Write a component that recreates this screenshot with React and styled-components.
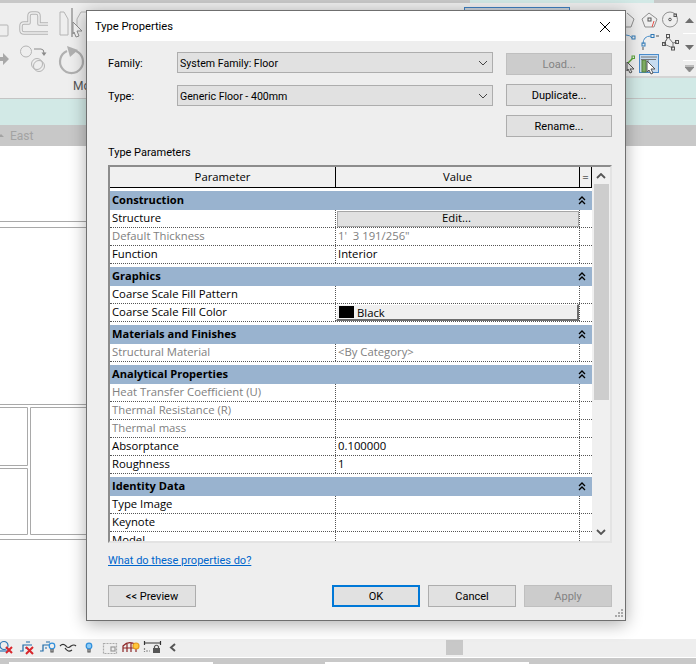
import React from 'react';
import styled, { createGlobalStyle } from 'styled-components';

const TOP_BUTTONS = [
    { label: 'Load...', disabled: true },
    { label: 'Duplicate...' },
    { label: 'Rename...' }
];

const GROUPS = [
    {
        title: 'Construction',
        rows: [
            { name: 'Structure', edit: 'Edit...' },
            { name: 'Default Thickness', value: '1\'  3 191/256"', dim: true },
            { name: 'Function', value: 'Interior' }
        ]
    },
    {
        title: 'Graphics',
        rows: [
            { name: 'Coarse Scale Fill Pattern' },
            { name: 'Coarse Scale Fill Color', color: 'Black' }
        ]
    },
    {
        title: 'Materials and Finishes',
        rows: [
            { name: 'Structural Material', value: '<By Category>', dim: true }
        ]
    },
    {
        title: 'Analytical Properties',
        rows: [
            { name: 'Heat Transfer Coefficient (U)', dim: true },
            { name: 'Thermal Resistance (R)', dim: true },
            { name: 'Thermal mass', dim: true },
            { name: 'Absorptance', value: '0.100000' },
            { name: 'Roughness', value: '1' }
        ]
    },
    {
        title: 'Identity Data',
        rows: [{ name: 'Type Image' }, { name: 'Keynote' }, { name: 'Model' }]
    }
];

const DoubleChevron = () => (
    <svg width="8" height="9" viewBox="0 0 8 9" fill="none" stroke="#000" strokeWidth="1.3">
        <path d="M1 4 L4 1 L7 4" />
        <path d="M1 8 L4 5 L7 8" />
    </svg>
);

const SelectArrow = () => (
    <svg width="10" height="6" viewBox="0 0 10 6" fill="none" stroke="#444" strokeWidth="1">
        <path d="M1 1 L5 5 L9 1" />
    </svg>
);

const LeftRibbonIcons = () => (
    <svg width="86" height="76" viewBox="0 3 86 76" fill="none" stroke="#b4b4b4">
        <rect x="-2" y="25" width="10" height="11" rx="1" strokeWidth="1" />
        <g strokeLinejoin="round">
            <path d="M48 24 H39 V16 Q39 13 36 13 H32 Q29 13 29 16 V23 H24 Q21 23 21 26 V30 Q21 33 24 33 H48" strokeWidth="3.5" />
            <path d="M48 24 H39 V16 Q39 13 36 13 H32 Q29 13 29 16 V23 H24 Q21 23 21 26 V30 Q21 33 24 33 H48" stroke="#eee" strokeWidth="1.5" />
        </g>
        <path d="M60 12 H64 L68 19 V35 H60 Z" strokeWidth="1" />
        <path d="M77 35 V19 L81 12 H86" strokeWidth="1" />
        <path d="M72 8 V37" stroke="#9a9a9a" strokeWidth="1.5" />
        <path d="M73 22 L82 31 H77 L79 36 L76 37 L74 32 L73 34 Z" fill="#f4f4f4" stroke="#8d8d8d" strokeWidth="1" />
        <path d="M-2 57 H3 V53 L9 59 L3 65 V61 H-2 Z" fill="#a8a8a8" stroke="none" />
        <circle cx="26" cy="51.500" r="5.500" strokeWidth="1" />
        <circle cx="37" cy="64" r="5.500" strokeWidth="1" />
        <circle cx="39" cy="66" r="5.500" strokeWidth="1" />
        <path d="M34 49 H41 Q44 49 44 53" stroke="#8a8a8a" strokeWidth="1" />
        <path d="M41.500 52.500 H46.500 L44 56 Z" fill="#8a8a8a" stroke="none" />
        <path d="M67 51 A11.500 11.500 0 1 0 76 51" stroke="#b0b0b0" strokeWidth="2.2" />
        <path d="M67 46 L78 50 L70 57 Z" fill="#b0b0b0" stroke="none" />
    </svg>
);

const RightRibbonIcons = () => (
    <svg width="57" height="70" viewBox="626 8 57 70" fill="none" stroke="#8f8f8f" strokeWidth="1">
        <path d="M627 13 L634 19 L631 27 H626" />
        <path d="M649 13 L657 19 L654 27 H645 L642 19 Z" />
        <rect x="648" y="18" width="3" height="3" stroke="#555" />
        <path d="M654 21 L652 27" stroke="#e5524c" />
        <circle cx="670" cy="19.500" r="7.500" />
        <circle cx="670" cy="19.500" r="1.300" stroke="#555" />
        <rect x="674" y="14" width="2.500" height="2.500" stroke="#555" />
        <path d="M626 35 Q630 35 632 38" stroke="#4d90c9" />
        <rect x="632" y="36" width="3" height="3" stroke="#2f78b5" />
        <path d="M643 44 Q643 36 651 36" stroke="#4d90c9" />
        <rect x="651" y="34.500" width="3" height="3" stroke="#2f78b5" />
        <rect x="642" y="43" width="3" height="3" stroke="#2f78b5" />
        <path d="M656 36 H659 M643 47 V50" stroke="#555" />
        <path d="M664 44 L668 37 L673 43 L677 42 M673 43 L673 48 M668 37 L664 44 L673 48" stroke="#777" />
        <rect x="666.500" y="34.500" width="3" height="3" stroke="#555" />
        <rect x="662.500" y="42.500" width="3" height="3" stroke="#555" />
        <rect x="675.500" y="40.500" width="3" height="3" stroke="#555" />
        <rect x="671.500" y="47" width="3" height="3" stroke="#555" />
        <path d="M628 63 L633 58" stroke="#5aa637" strokeWidth="1.500" />
        <rect x="632" y="56" width="2.500" height="2.500" stroke="#5aa637" />
        <path d="M627 62 L634 69 H630 L632 72 L630 73 L628 69 L627 71 Z" fill="#eee" stroke="#555" />
        <rect x="639.500" y="54.500" width="19" height="18" fill="#c6dcf1" stroke="#4a8ccb" />
        <rect x="642" y="60" width="4" height="12" fill="#7eab63" stroke="#54803c" />
        <path d="M641 57 H657 M641 59.500 H656 M648 60 V72" stroke="#777" />
        <path d="M647 61 L655 69 H651 L653 73 L651 74 L649 70 L647 72 Z" fill="#fff" stroke="#555" />
    </svg>
);

const CanvasDrawing = () => (
    <svg width="696" height="493" viewBox="0 146 696 493" fill="none" stroke="#a9a9a9" strokeWidth="1">
        <path d="M0 221.500 H90 M0 227.500 H90 M0 404.500 H90 M0 539.500 H90" />
        <path d="M0 407.500 H27.500 V465.500 H0 M0 468.500 H27.500 V534.500 H0" />
        <path d="M90 407.500 H30.500 V534.500 H90" />
    </svg>
);

const StatusIcons = () => (
    <svg width="178" height="18" viewBox="0 639 178 18" fill="none" strokeWidth="1.200">
        <circle cx="4" cy="645.500" r="4" stroke="#2f78b5" />
        <path d="M0 651 H9" stroke="#2f78b5" />
        <path d="M6 647 L12 653 M12 647 L6 653" stroke="#d8262c" strokeWidth="2" />
        <path d="M20 651 H23 V645 H32 M26 642 H30 M25 648 H27" stroke="#1f6aa8" />
        <path d="M26 647 L33 654 M33 647 L26 654" stroke="#d8262c" strokeWidth="2" />
        <path d="M40 651 H43 V645 H49 M46 642 H50 M45 648 H47" stroke="#1f6aa8" />
        <circle cx="52" cy="646" r="2.800" stroke="#2f8fdc" />
        <path d="M51 649 V652 H53 V649" stroke="#555" />
        <path d="M60 646 Q63 643 66 646 Q68 649 71 646 Q74 644 76 646 M65 648 Q68 653 72 650" stroke="#333" />
        <circle cx="89" cy="646" r="2.800" fill="#8ccaf5" stroke="#2f8fdc" />
        <path d="M88 649 V652 H90 V649" stroke="#555" />
        <rect x="103.500" y="643.500" width="13" height="10" stroke="#aaa" strokeDasharray="2 1" />
        <rect x="111" y="647" width="4" height="4" stroke="#999" />
        <path d="M123 652 V646 Q129 640 136 645 V652 M123 648 H135 M127 644 V652 M131 643 V652" stroke="#8d2626" />
        <circle cx="136" cy="646" r="3" fill="#ffc73a" stroke="#e79a1c" />
        <path d="M144.500 641 V645 M160.500 641 V645 M145 643 H160" stroke="#333" />
        <path d="M144.500 648 V652 M146 651 H150" stroke="#888" strokeDasharray="2 1" />
        <rect x="153" y="648" width="7" height="5" fill="#555" stroke="none" />
        <path d="M154.500 648 V646.500 Q156.500 644 158.500 646.500 V648" stroke="#555" />
        <path d="M175 644 L171 647.500 L175 651" stroke="#555" strokeWidth="2" />
    </svg>
);

const renderValue = row => {
    if (row.edit) {
        return <EditButton>{row.edit}</EditButton>;
    }

    if (row.color) {
        return (
            <ColorButton>
                <Swatch />
                {row.color}
            </ColorButton>
        );
    }

    return row.value;
};

const App = () => (
    <Screen>
        <GlobalStyle />
        <TopStrip>
            <StripPart $color="#c8c8c8" $width="470px" />
            <StripPart $color="#d2e9e6" $width="184px" />
            <StripPart $color="#c8c8c8" $width="42px" />
        </TopStrip>
        <Ribbon>
            <RibbonMain>
                <RibbonTools>
                    <LeftRibbonIcons />
                    <RibbonLabel>Modify</RibbonLabel>
                </RibbonTools>
                <SelectedTab />
            </RibbonMain>
            <RibbonSide>
                <RibbonIcons>
                    <RightRibbonIcons />
                </RibbonIcons>
                <RibbonScroll>
                    <ScrollCell $height="25px">
                        <svg width="9" height="5" viewBox="0 0 9 5"><path d="M0 5 L4.500 0 L9 5 Z" fill="#6e6e6e" /></svg>
                    </ScrollCell>
                    <ScrollCell $height="26px">
                        <svg width="9" height="5" viewBox="0 0 9 5"><path d="M0 0 L4.500 5 L9 0 Z" fill="#6e6e6e" /></svg>
                    </ScrollCell>
                    <ScrollCell $height="15px">
                        <svg width="9" height="7" viewBox="0 0 9 7"><path d="M0 0 H9 M0 2 L4.500 7 L9 2 Z" fill="#8a8a8a" stroke="#8a8a8a" strokeWidth="1" /></svg>
                    </ScrollCell>
                </RibbonScroll>
            </RibbonSide>
        </Ribbon>
        <ViewTabs>
            <TabArrow />
            East
        </ViewTabs>
        <Canvas>
            <CanvasDrawing />
        </Canvas>
        <StatusBar>
            <StatusIcons />
            <StatusThumb />
        </StatusBar>
        <BottomBar>
            <BottomField $left="9px" />
            <BottomField $left="112px" />
        </BottomBar>

        <Dialog>
            <TitleBar>
                Type Properties
                <CloseIcon width="12" height="12" viewBox="0 0 12 12" stroke="#000" strokeWidth="1">
                    <path d="M1 1 L11 11 M11 1 L1 11" />
                </CloseIcon>
            </TitleBar>
            <DialogBody>
                <TopSection>
                    <Fields>
                        <Field>
                            <FieldLabel>Family:</FieldLabel>
                            <Select>
                                System Family: Floor
                                <SelectArrow />
                            </Select>
                        </Field>
                        <Field>
                            <FieldLabel>Type:</FieldLabel>
                            <Select>
                                Generic Floor - 400mm
                                <SelectArrow />
                            </Select>
                        </Field>
                    </Fields>
                    <SideButtons>
                        {TOP_BUTTONS.map(button => (
                            <Button key={button.label} $disabled={button.disabled}>
                                {button.label}
                            </Button>
                        ))}
                    </SideButtons>
                </TopSection>
                <SectionLabel>Type Parameters</SectionLabel>
                <Table>
                    <Grid>
                        <HeaderRow>
                            <HeaderCell>Parameter</HeaderCell>
                            <HeaderCell>Value</HeaderCell>
                            <HeaderCell>=</HeaderCell>
                        </HeaderRow>
                        {GROUPS.map(group => (
                            <Group key={group.title}>
                                <GroupRow>
                                    {group.title}
                                    <DoubleChevron />
                                </GroupRow>
                                {group.rows.map(row => (
                                    <Row key={row.name} $dim={row.dim}>
                                        <NameCell>{row.name}</NameCell>
                                        <ValueCell $flush={row.edit || row.color}>
                                            {renderValue(row)}
                                        </ValueCell>
                                        <FlagCell />
                                    </Row>
                                ))}
                            </Group>
                        ))}
                    </Grid>
                    <Scrollbar>
                        <svg width="10" height="6" viewBox="0 0 10 6" fill="none" stroke="#555" strokeWidth="1.800">
                            <path d="M1 5 L5 1 L9 5" />
                        </svg>
                        <ScrollThumb />
                        <svg width="10" height="6" viewBox="0 0 10 6" fill="none" stroke="#555" strokeWidth="1.800">
                            <path d="M1 1 L5 5 L9 1" />
                        </svg>
                    </Scrollbar>
                </Table>
                <HelpLink>What do these properties do?</HelpLink>
                <Footer>
                    <Button $width="88px">&lt;&lt; Preview</Button>
                    <FooterActions>
                        <Button $width="88px" $primary>OK</Button>
                        <Button $width="88px">Cancel</Button>
                        <Button $width="88px" $disabled>Apply</Button>
                    </FooterActions>
                </Footer>
            </DialogBody>
            <Grip width="9" height="9" viewBox="0 0 9 9" fill="#a9a9a9">
                <rect x="7" y="0" width="2" height="2" />
                <rect x="4" y="3" width="2" height="2" />
                <rect x="7" y="3" width="2" height="2" />
                <rect x="1" y="6" width="2" height="2" />
                <rect x="4" y="6" width="2" height="2" />
                <rect x="7" y="6" width="2" height="2" />
            </Grip>
        </Dialog>
    </Screen>
);

export default App;

const TABLE_FONT = `"Open Sans", "Noto Sans", "Liberation Sans", sans-serif`;
const CONTROL_FONT = `Roboto, "Open Sans", "Liberation Sans", sans-serif`;

const GlobalStyle = createGlobalStyle`
    html, body {
        margin: 0;
        padding: 0;
        background: #fff;
    }
`;

const Screen = styled.div`
    position: relative;
    display: flex;
    flex-direction: column;
    width: 696px;
    height: 664px;
    overflow: hidden;
    font-family: ${CONTROL_FONT};
    font-size: 11px;
    color: #000;
`;

const TopStrip = styled.div`
    display: flex;
    height: 3px;
`;

const StripPart = styled.div`
    width: ${props => props.$width};
    background: ${props => props.$color};
`;

const Ribbon = styled.div`
    display: flex;
    height: 122px;
    background: linear-gradient(#d2e9e6 95px, #c4c4c4 95px, #c4c4c4 96px, #d2e9e6 96px);
`;

const RibbonMain = styled.div`
    display: flex;
    align-items: flex-start;
    width: 626px;
    height: 95px;
    background: #eeeeee;
`;

const RibbonTools = styled.div`
    display: flex;
    flex-direction: column;
    width: 86px;
`;

const RibbonLabel = styled.div`
    margin-left: 73px;
    margin-top: 0;
    font-size: 12px;
    color: #555;
    white-space: nowrap;
`;

const SelectedTab = styled.div`
    width: 106px;
    height: 30px;
    margin: 4px 0 0 378px;
    box-sizing: border-box;
    border: 1px solid #3f7fc0;
    background: #ccd3da;
`;

const RibbonSide = styled.div`
    display: flex;
    width: 70px;
    height: 75px;
    box-sizing: border-box;
    padding-top: 5px;
    background: #eeeeee;
    border-bottom: 2px solid #d4d4d4;
`;

const RibbonIcons = styled.div`
    width: 57px;
`;

const RibbonScroll = styled.div`
    display: flex;
    flex-direction: column;
    width: 13px;
    gap: 1px;
    background: #fff;
`;

const ScrollCell = styled.div`
    display: flex;
    align-items: center;
    justify-content: center;
    height: ${props => props.$height};
    background: #eeeeee;
`;

const ViewTabs = styled.div`
    display: flex;
    align-items: center;
    gap: 6px;
    height: 21px;
    background: #c8c8c8;
    color: #a3a3a3;
    font-size: 12px;
`;

const TabArrow = styled.div`
    width: 0;
    height: 0;
    margin-left: -2px;
    border-left: 3px solid transparent;
    border-right: 3px solid transparent;
    border-bottom: 3px solid #a3a3a3;
`;

const Canvas = styled.div`
    flex: 1;
    background: #fff;
    min-height: 0;
    svg {
        display: block;
    }
`;

const StatusBar = styled.div`
    display: flex;
    align-items: flex-start;
    height: 18px;
    background: #eeeeee;
`;

const StatusThumb = styled.div`
    width: 17px;
    height: 15px;
    margin-left: 268px;
    margin-top: 1px;
    background: #c8c8c8;
`;

const BottomBar = styled.div`
    display: flex;
    height: 6px;
    margin-top: 1px;
    background: #c8c8c8;
`;

const BottomField = styled.div`
    width: 204px;
    height: 2px;
    margin-top: 4px;
    margin-left: ${props => props.$left};
    background: #fff;
`;

const Dialog = styled.div`
    position: absolute;
    left: 86px;
    top: 10px;
    display: flex;
    flex-direction: column;
    width: 540px;
    height: 611px;
    box-sizing: border-box;
    border: 1px solid #6f6f6f;
    background: #eeeeee;
    box-shadow: 0 3px 16px rgba(0, 0, 0, 0.32);
`;

const TitleBar = styled.div`
    display: flex;
    align-items: center;
    justify-content: space-between;
    flex: none;
    height: 30px;
    box-sizing: border-box;
    padding: 1px 14px 0 8px;
    background: #fff;
    font-size: 11.2px;
`;

const CloseIcon = styled.svg`
    flex: none;
`;

const DialogBody = styled.div`
    display: flex;
    flex-direction: column;
    padding: 11px 13px 0 21px;
`;

const TopSection = styled.div`
    display: flex;
    justify-content: space-between;
`;

const Fields = styled.div`
    display: flex;
    flex-direction: column;
    gap: 12px;
`;

const Field = styled.div`
    display: flex;
    align-items: center;
`;

const FieldLabel = styled.div`
    width: 69px;
    padding-top: 1px;
`;

const Select = styled.div`
    display: flex;
    align-items: center;
    justify-content: space-between;
    width: 316px;
    height: 21px;
    box-sizing: border-box;
    padding: 1px 4px 0 2px;
    border: 1px solid #adadad;
    background: #e1e1e1;
    font-size: 10.6px;
`;

const SideButtons = styled.div`
    display: flex;
    flex-direction: column;
    gap: 9px;
    width: 106px;
    padding-top: 1px;
`;

const Button = styled.div`
    display: flex;
    align-items: center;
    justify-content: center;
    width: ${props => props.$width || '100%'};
    height: 22px;
    box-sizing: border-box;
    border: ${props =>
        props.$primary
            ? '2px solid #0078d7'
            : props.$disabled
            ? '1px solid #bfbfbf'
            : '1px solid #adadad'};
    background: ${props => (props.$disabled ? '#cccccc' : '#e1e1e1')};
    color: ${props => (props.$disabled ? '#838383' : '#000')};
`;

const SectionLabel = styled.div`
    height: 16px;
    line-height: 16px;
    margin-top: 7px;
    margin-bottom: 5px;
    padding-top: 1px;
    box-sizing: border-box;
`;

const Table = styled.div`
    display: flex;
    height: 378px;
    box-sizing: border-box;
    border-style: solid;
    border-width: 2px 2px 2px 2px;
    border-color: #8c8c8c #e3e3e3 #e3e3e3 #8c8c8c;
    font-family: ${TABLE_FONT};
    font-size: 11.3px;
`;

const Grid = styled.div`
    width: 482px;
    overflow: hidden;
    background: #fff;
`;

const HeaderRow = styled.div`
    display: grid;
    grid-template-columns: 226px 244px 12px;
    height: 21px;
    box-sizing: border-box;
    margin-bottom: 3px;
    border-bottom: 1px solid #000;
    background: #f0f0f0;
`;

const HeaderCell = styled.div`
    display: flex;
    align-items: center;
    justify-content: center;
    padding-bottom: 2px;
    border-right: 1px solid #000;
    &:last-child {
        width: 11px;
    }
`;

const Group = styled.div`
    margin-bottom: 3px;
`;

const GroupRow = styled.div`
    display: flex;
    align-items: center;
    justify-content: space-between;
    height: 19px;
    box-sizing: border-box;
    padding: 0 6px 2px 2px;
    background: #99b3cf;
    font-weight: 700;
    font-size: 11.1px;
    svg {
        margin-top: 2px;
    }
`;

const Row = styled.div`
    display: grid;
    grid-template-columns: 226px 244px 12px;
    grid-template-rows: 17px;
    height: 18px;
    box-sizing: border-box;
    border-bottom: 1px dotted #555;
    color: ${props => (props.$dim ? '#808080' : '#000')};
`;

const NameCell = styled.div`
    display: flex;
    align-items: center;
    padding: 0 0 2px 2px;
    border-right: 1px dotted #555;
    white-space: nowrap;
`;

const ValueCell = styled.div`
    display: flex;
    align-items: center;
    padding: 0 0 ${props => (props.$flush ? '0' : '2px')} 2px;
    border-right: 1px dotted #555;
    white-space: pre;
`;

const FlagCell = styled.div``;

const EditButton = styled.div`
    display: flex;
    align-items: center;
    justify-content: center;
    width: 242px;
    height: 16px;
    margin-left: -1px;
    padding: 0 3px 2px 0;
    box-sizing: border-box;
    border: 1px solid #a6a6a6;
    background: #e1e1e1;
    color: #000;
`;

const ColorButton = styled.div`
    display: flex;
    align-items: center;
    gap: 3px;
    width: 243px;
    height: 17px;
    margin-left: -2px;
    padding-left: 2px;
    box-sizing: border-box;
    border-style: solid;
    border-width: 1px 2px 2px 1px;
    border-color: #fff #6d6d6d #6d6d6d #fff;
    background: #f0f0f0;
`;

const Swatch = styled.div`
    width: 15px;
    height: 12px;
    background: #000;
`;

const Scrollbar = styled.div`
    display: flex;
    flex-direction: column;
    align-items: center;
    justify-content: space-between;
    width: 18px;
    padding: 6px 0;
    box-sizing: border-box;
    background: #f0f0f0;
`;

const ScrollThumb = styled.div`
    width: 15px;
    height: 216px;
    margin-top: 5px;
    margin-bottom: auto;
    background: #cdcdcd;
`;

const HelpLink = styled.a`
    align-self: flex-start;
    margin-top: 9px;
    padding-top: 1px;
    line-height: 16px;
    color: #0066cc;
    text-decoration: underline;
`;

const Footer = styled.div`
    display: flex;
    justify-content: space-between;
    margin-top: 16px;
`;

const FooterActions = styled.div`
    display: flex;
    gap: 8px;
`;

const Grip = styled.svg`
    position: absolute;
    right: 2px;
    bottom: 2px;
`;
